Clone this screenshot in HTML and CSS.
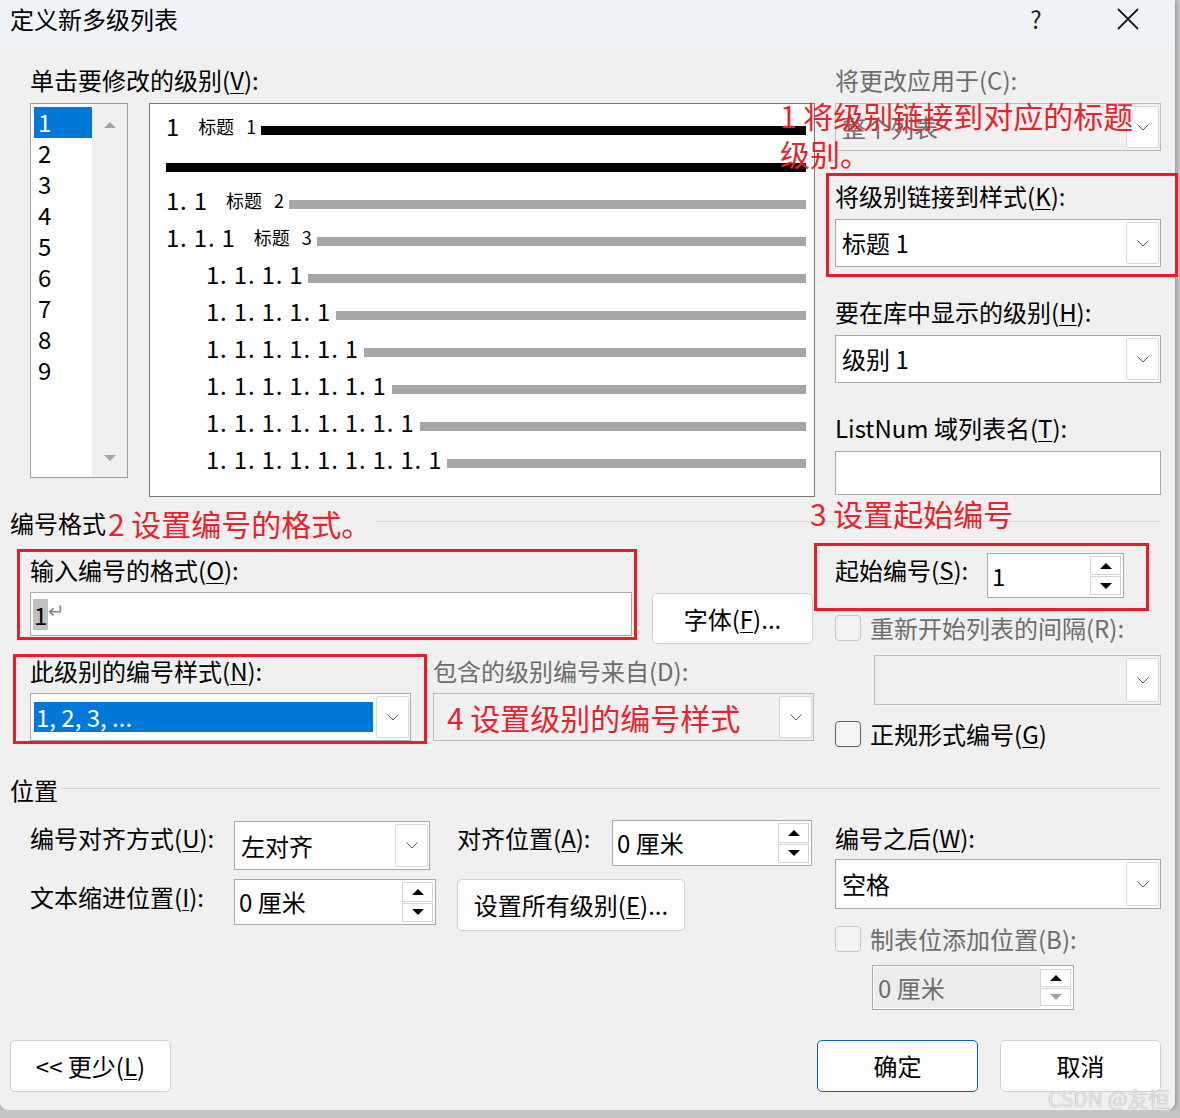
FILE: index.html
```html
<!DOCTYPE html>
<html>
<head>
    <title>定义新多级列表</title>
    <link rel="stylesheet" href="styles.css">
</head>
<body>
<div class="dialog">
    <div class="titlebar">
        <span class="title">定义新多级列表</span>
        <span class="tb-btn help">?</span>
        <span class="tb-btn">
            <svg width="22" height="22" viewBox="0 0 22 22"><path d="M1 1l20 20M21 1 1 21" stroke="#1b1b1b" stroke-width="1.8"/></svg>
        </span>
    </div>

    <div class="main">
        <!-- levels + preview / right fields -->
        <section class="sec-top">
            <div>
                <div class="lbl">单击要修改的级别(<u>V</u>):</div>
                <div class="levels-row">
                    <div class="levels">
                        <div class="lv-items">
                            <div class="lv-item selected">1</div>
                            <div class="lv-item">2</div>
                            <div class="lv-item">3</div>
                            <div class="lv-item">4</div>
                            <div class="lv-item">5</div>
                            <div class="lv-item">6</div>
                            <div class="lv-item">7</div>
                            <div class="lv-item">8</div>
                            <div class="lv-item">9</div>
                        </div>
                        <div class="lv-scroll">
                            <span class="tri-up gray"></span>
                            <span class="tri-down gray"></span>
                        </div>
                    </div>
                    <div class="preview">
                        <div class="pv-row"><span class="pv-num">1</span><span class="pv-hd">标题<i>1</i></span><span class="pv-bar dark"></span></div>
                        <div class="pv-row"><span class="pv-bar dark solo"></span></div>
                        <div class="pv-row"><span class="pv-num">1. 1</span><span class="pv-hd">标题<i>2</i></span><span class="pv-bar"></span></div>
                        <div class="pv-row"><span class="pv-num">1. 1. 1</span><span class="pv-hd">标题<i>3</i></span><span class="pv-bar"></span></div>
                        <div class="pv-row sub"><span class="pv-num">1. 1. 1. 1</span><span class="pv-bar"></span></div>
                        <div class="pv-row sub"><span class="pv-num">1. 1. 1. 1. 1</span><span class="pv-bar"></span></div>
                        <div class="pv-row sub"><span class="pv-num">1. 1. 1. 1. 1. 1</span><span class="pv-bar"></span></div>
                        <div class="pv-row sub"><span class="pv-num">1. 1. 1. 1. 1. 1. 1</span><span class="pv-bar"></span></div>
                        <div class="pv-row sub"><span class="pv-num">1. 1. 1. 1. 1. 1. 1. 1</span><span class="pv-bar"></span></div>
                        <div class="pv-row sub"><span class="pv-num">1. 1. 1. 1. 1. 1. 1. 1. 1</span><span class="pv-bar"></span></div>
                    </div>
                </div>
            </div>
            <div>
                <div class="field">
                    <div class="lbl disabled">将更改应用于(C):</div>
                    <div class="combo off"><span class="val">整个列表</span><span class="drop"><svg width="12" height="7" viewBox="0 0 12 7"><path d="M.5.5 6 6l5.5-5.5" fill="none" stroke="#5a5a5a"/></svg></span></div>
                </div>
                <div class="field">
                    <div class="lbl">将级别链接到样式(<u>K</u>):</div>
                    <div class="combo"><span class="val">标题 1</span><span class="drop"><svg width="12" height="7" viewBox="0 0 12 7"><path d="M.5.5 6 6l5.5-5.5" fill="none" stroke="#5a5a5a"/></svg></span></div>
                </div>
                <div class="field">
                    <div class="lbl">要在库中显示的级别(<u>H</u>):</div>
                    <div class="combo"><span class="val">级别 1</span><span class="drop"><svg width="12" height="7" viewBox="0 0 12 7"><path d="M.5.5 6 6l5.5-5.5" fill="none" stroke="#5a5a5a"/></svg></span></div>
                </div>
                <div class="field">
                    <div class="lbl">ListNum 域列表名(<u>T</u>):</div>
                    <div class="textbox"></div>
                </div>
            </div>
        </section>

        <div class="group-head fmt-head">编号格式<span class="note">2 设置编号的格式。</span><span class="rule"></span></div>

        <!-- number format -->
        <section class="sec-fmt">
            <div>
                <div class="lbl fmt-lbl">输入编号的格式(<u>O</u>):</div>
                <div class="fmt-row">
                    <div class="textbox fmt-input"><span class="sel">1</span><span class="para">↵</span></div>
                    <button class="btn font-btn">字体(<u>F</u>)...</button>
                </div>
                <div class="style-row">
                    <div>
                        <div class="lbl">此级别的编号样式(<u>N</u>):</div>
                        <div class="combo focus"><span class="val">1, 2, 3, ...</span><span class="drop"><svg width="12" height="7" viewBox="0 0 12 7"><path d="M.5.5 6 6l5.5-5.5" fill="none" stroke="#5a5a5a"/></svg></span></div>
                    </div>
                    <div>
                        <div class="lbl disabled">包含的级别编号来自(D):</div>
                        <div class="combo off"><span class="val note-in">4 设置级别的编号样式</span><span class="drop"><svg width="12" height="7" viewBox="0 0 12 7"><path d="M.5.5 6 6l5.5-5.5" fill="none" stroke="#5a5a5a"/></svg></span></div>
                    </div>
                </div>
            </div>
            <div>
                <div class="start-row">
                    <span class="lbl start-lbl">起始编号(<u>S</u>):</span>
                    <div class="spin start-spin"><span class="val">1</span><span class="arrows"><span><i class="tri-up"></i></span><span><i class="tri-down"></i></span></span></div>
                </div>
                <div class="check-row restart"><span class="chk off"></span><span class="disabled">重新开始列表的间隔(R):</span></div>
                <div class="combo off restart-combo"><span class="val"></span><span class="drop"><svg width="12" height="7" viewBox="0 0 12 7"><path d="M.5.5 6 6l5.5-5.5" fill="none" stroke="#5a5a5a"/></svg></span></div>
                <div class="check-row legal"><span class="chk"></span><span>正规形式编号(<u>G</u>)</span></div>
            </div>
        </section>

        <div class="group-head pos-head">位置<span class="rule"></span></div>

        <!-- position -->
        <section class="sec-pos">
            <div>
                <div class="pos-row first">
                    <span class="lbl pos-lbl">编号对齐方式(<u>U</u>):</span>
                    <div class="combo align-combo"><span class="val">左对齐</span><span class="drop"><svg width="12" height="7" viewBox="0 0 12 7"><path d="M.5.5 6 6l5.5-5.5" fill="none" stroke="#5a5a5a"/></svg></span></div>
                    <span class="lbl at-lbl">对齐位置(<u>A</u>):</span>
                    <div class="spin at-spin"><span class="val">0 厘米</span><span class="arrows"><span><i class="tri-up"></i></span><span><i class="tri-down"></i></span></span></div>
                </div>
                <div class="pos-row second">
                    <span class="lbl pos-lbl">文本缩进位置(<u>I</u>):</span>
                    <div class="spin indent-spin"><span class="val">0 厘米</span><span class="arrows"><span><i class="tri-up"></i></span><span><i class="tri-down"></i></span></span></div>
                    <button class="btn all-btn">设置所有级别(<u>E</u>)...</button>
                </div>
            </div>
            <div>
                <div class="lbl after-lbl">编号之后(<u>W</u>):</div>
                <div class="combo after-combo"><span class="val">空格</span><span class="drop"><svg width="12" height="7" viewBox="0 0 12 7"><path d="M.5.5 6 6l5.5-5.5" fill="none" stroke="#5a5a5a"/></svg></span></div>
                <div class="check-row tab"><span class="chk off"></span><span class="disabled">制表位添加位置(B):</span></div>
                <div class="spin off tab-spin"><span class="val">0 厘米</span><span class="arrows"><span><i class="tri-up"></i></span><span><i class="tri-down gray"></i></span></span></div>
            </div>
        </section>

        <div class="footer">
            <button class="btn less-btn">&lt;&lt; 更少(<u>L</u>)</button>
            <span class="spacer"></span>
            <button class="btn ok-btn">确定</button>
            <button class="btn cancel-btn">取消</button>
        </div>
    </div>

    <!-- annotations drawn over the dialog -->
    <div class="mark mark-link"></div>
    <div class="mark mark-fmt"></div>
    <div class="mark mark-start"></div>
    <div class="mark mark-style"></div>
    <div class="note-float note-link">1 将级别链接到对应的标题<br>级别。</div>
    <div class="note-float note-start">3 设置起始编号</div>
    <div class="watermark">CSDN @友恒</div>
</div>
</body>
</html>
```

FILE: styles.css
```css
* {
    box-sizing: border-box;
}
html {
    background: #c6c6c6;
}
body {
    margin: 0;
    font-family: "Noto Sans CJK SC", "Noto Sans", sans-serif;
    font-size: 24px;
    line-height: 32px;
    color: #000;
}
u {
    text-underline-offset: 3px;
    text-decoration-thickness: 1px;
}
button {
    font: inherit;
    color: inherit;
}
.dialog {
    position: relative;
    width: 1175px;
    height: 1110px;
    background: #f0f0f0;
    border-radius: 0 0 8px 8px;
    box-shadow: 1px 1px 4px rgba(0,0,0,0.3);
}
.titlebar {
    height: 47px;
    background: #eef4f8;
    display: flex;
    align-items: flex-start;
    padding-left: 10px;
}
.title {
    flex: 1;
    line-height: 38px;
}
.tb-btn {
    width: 92px;
    height: 38px;
    display: flex;
    align-items: center;
    justify-content: center;
    color: #1b1b1b;
}
.tb-btn:last-child {
    margin-right: 1px;
}
.main {
    padding: 0 14px 0 30px;
}
.disabled {
    color: #6d6d6d;
}

/* top section */
.sec-top {
    display: grid;
    grid-template-columns: 785px 326px;
    column-gap: 20px;
    padding-top: 17px;
}
.levels-row {
    display: flex;
    align-items: flex-start;
    gap: 21px;
    margin-top: 7px;
}
.levels {
    width: 98px;
    height: 375px;
    border: 1px solid #a0a0a0;
    background: #f0f0f0;
    display: flex;
}
.lv-items {
    width: 61px;
    background: #fff;
    padding: 3px 0 0 3px;
}
.lv-item {
    height: 31px;
    line-height: 29px;
    padding-left: 4px;
}
.lv-item.selected {
    background: #0078d7;
    color: #fff;
}
.lv-scroll {
    flex: 1;
    display: flex;
    flex-direction: column;
    justify-content: space-between;
    align-items: center;
    padding: 18px 0 16px;
}
.tri-up, .tri-down {
    display: block;
    width: 0;
    height: 0;
    border-left: 6px solid transparent;
    border-right: 6px solid transparent;
}
.tri-up {
    border-bottom: 6px solid #000;
}
.tri-down {
    border-top: 6px solid #000;
}
.tri-up.gray {
    border-bottom-color: #a3a3a3;
}
.tri-down.gray {
    border-top-color: #a3a3a3;
}
.preview {
    width: 666px;
    height: 394px;
    border: 1px solid #7a7a7a;
    background: #fff;
    padding: 3px 8px 0 16px;
}
.pv-row {
    display: flex;
    align-items: center;
    height: 37px;
    white-space: nowrap;
}
.pv-row.sub {
    padding-left: 40px;
}
.pv-num {
    letter-spacing: 0.8px;
}
.pv-hd {
    font-size: 18px;
    margin-left: 18px;
}
.pv-hd i {
    font-style: normal;
    margin-left: 12px;
}
.pv-bar {
    flex: 1;
    height: 9px;
    background: #a6a6a6;
    margin: 10px 0 0 5px;
}
.pv-bar.dark {
    background: #000;
}
.pv-bar.solo {
    margin-left: 0;
}

.field + .field {
    margin-top: 29px;
}
.field .lbl {
    margin-bottom: 7px;
}
.field .textbox {
    height: 44px;
}

/* controls */
.combo {
    display: flex;
    align-items: center;
    height: 48px;
    border: 1px solid #a9a9a9;
    background: #fff;
    padding-left: 6px;
}
.combo .val {
    flex: 1;
    white-space: nowrap;
}
.combo .drop {
    width: 33px;
    align-self: stretch;
    margin: 2px 1px 2px 0;
    border: 1px solid #d9d9d9;
    border-radius: 2px;
    background: #fff;
    display: flex;
    align-items: center;
    justify-content: center;
}
.combo.off {
    background: #f0f0f0;
    border-color: #bcbcbc;
    color: #6d6d6d;
}
.combo.focus {
    padding-left: 3px;
}
.combo.focus .val {
    background: #0078d7;
    color: #fff;
    height: 30px;
    line-height: 30px;
    padding-left: 2px;
    margin-right: 3px;
}
.textbox {
    height: 46px;
    border: 1px solid #a9a9a9;
    background: #fff;
}
.spin {
    display: flex;
    align-items: center;
    height: 46px;
    border: 1px solid #a9a9a9;
    background: #fff;
    padding-left: 4px;
}
.spin .val {
    flex: 1;
}
.spin .arrows {
    width: 31px;
    align-self: stretch;
    margin: 2px 2px 2px 0;
    display: flex;
    flex-direction: column;
    gap: 1px;
}
.spin .arrows span {
    flex: 1;
    border: 1px solid #d5d5d5;
    background: #fff;
    display: flex;
    align-items: center;
    justify-content: center;
}
.spin.off {
    color: #6d6d6d;
    padding: 1px 0 1px 1px;
}
.spin.off .val {
    align-self: stretch;
    background: #ececec;
    padding-left: 4px;
    line-height: 42px;
}
.btn {
    height: 52px;
    border: 1px solid #d0d0d0;
    border-radius: 5px;
    background: #fdfdfd;
    padding: 0;
}
.check-row {
    display: flex;
    align-items: center;
    gap: 9px;
    height: 32px;
}
.chk {
    width: 26px;
    height: 26px;
    border: 1px solid #5f5f5f;
    border-radius: 4px;
    background: #f7f7f7;
}
.chk.off {
    border-color: #c8c8c8;
    background: #f4f4f4;
}

/* group headings */
.group-head {
    display: flex;
    align-items: center;
    height: 32px;
    margin-left: -20px;
    white-space: nowrap;
}
.group-head .rule {
    flex: 1;
    height: 1px;
    background: #d7d7d7;
    margin: -3px 0 0 4px;
}
.fmt-head {
    margin-top: 10px;
}
.pos-head {
    margin-top: 24px;
}
.note {
    color: #e8232c;
    font-size: 30px;
    margin-left: 2px;
}

/* number format */
.sec-fmt, .sec-pos {
    display: grid;
    grid-template-columns: 783px 326px;
    column-gap: 22px;
}
.fmt-lbl {
    margin-top: 15px;
}
.fmt-row {
    display: flex;
    align-items: flex-start;
    gap: 20px;
    margin-top: 6px;
}
.fmt-input {
    width: 602px;
    height: 44px;
    display: flex;
    align-items: center;
    padding-left: 2px;
}
.fmt-input .sel {
    background: #c0c0c0;
    line-height: 31px;
    padding: 0 1px;
}
.fmt-input .para {
    color: #8a8a8a;
    font-size: 20px;
    margin-top: -8px;
}
.font-btn {
    width: 161px;
    height: 51px;
    margin-top: 1px;
}
.style-row {
    display: grid;
    grid-template-columns: 381px 381px;
    column-gap: 22px;
    margin-top: 11px;
}
.style-row .combo {
    margin-top: 6px;
}
.note-in {
    color: #e8232c;
    font-size: 30px;
    padding-left: 7px;
}
.start-row {
    display: flex;
    align-items: flex-start;
}
.start-lbl {
    width: 152px;
    margin-top: 15px;
}
.start-spin {
    width: 137px;
    height: 45px;
    margin-top: 14px;
}
.restart {
    margin-top: 14px;
}
.restart-combo {
    margin: 11px 0 0 39px;
    height: 50px;
}
.legal {
    margin-top: 13px;
}

/* position */
.pos-row {
    display: flex;
    align-items: flex-start;
}
.pos-row.first {
    margin-top: 14px;
}
.pos-row.second {
    margin-top: 9px;
}
.pos-lbl {
    width: 204px;
    margin-top: 2px;
}
.align-combo {
    width: 196px;
    height: 49px;
    margin-top: 1px;
}
.at-lbl {
    width: 155px;
    margin: 2px 0 0 27px;
}
.at-spin {
    width: 200px;
}
.indent-spin {
    width: 202px;
}
.all-btn {
    width: 228px;
    margin-left: 21px;
}
.after-lbl {
    margin-top: 16px;
}
.after-combo {
    height: 50px;
    margin-top: 5px;
}
.tab {
    margin-top: 14px;
}
.tab-spin {
    width: 202px;
    height: 45px;
    margin: 10px 0 0 37px;
}

/* footer */
.footer {
    display: flex;
    margin: 30px 0 0 -20px;
}
.footer .btn {
    width: 161px;
}
.spacer {
    flex: 1;
}
.ok-btn {
    border-color: #0067c0;
}
.cancel-btn {
    margin-left: 22px;
}

/* red annotations */
.mark {
    position: absolute;
    border: 3px solid #e61e28;
}
.mark-link {
    left: 826px;
    top: 173px;
    width: 352px;
    height: 104px;
}
.mark-fmt {
    left: 17px;
    top: 549px;
    width: 620px;
    height: 91px;
}
.mark-start {
    left: 814px;
    top: 543px;
    width: 335px;
    height: 68px;
}
.mark-style {
    left: 13px;
    top: 654px;
    width: 414px;
    height: 90px;
}
.note-float {
    position: absolute;
    color: #e8232c;
    font-size: 30px;
    line-height: 38px;
    white-space: nowrap;
}
.note-link {
    left: 780px;
    top: 96px;
}
.note-start {
    left: 810px;
    top: 494px;
}
.watermark {
    position: absolute;
    left: 1048px;
    top: 1082px;
    font-size: 21px;
    color: #e4e4e4;
    text-shadow: 0 0 1px #9a9a9a;
    white-space: nowrap;
}
```
